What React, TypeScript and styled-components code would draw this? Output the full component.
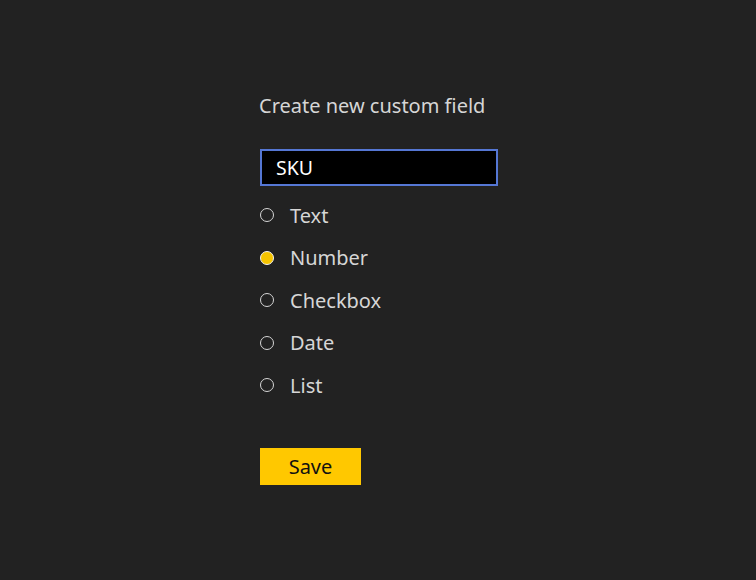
import { useState } from "react";
import styled, { createGlobalStyle } from "styled-components";

const GlobalStyle = createGlobalStyle`
  html, body {
    margin: 0;
    padding: 0;
    background: #222222;
  }
  body {
    font-family: "Noto Sans", "Open Sans", sans-serif;
  }
`;

const Page = styled.div`
  min-height: 580px;
  display: flex;
  justify-content: center;
  padding: 92px 0 0 2px;
  box-sizing: border-box;
`;

const Form = styled.form`
  width: 238px;
  display: flex;
  flex-direction: column;
`;

const Title = styled.h1`
  margin: 0 0 0 -1px;
  font-size: 20px;
  font-weight: 400;
  color: #d6d6d6;
  line-height: 27px;
  white-space: nowrap;
`;

const NameInput = styled.input`
  margin-top: 30px;
  height: 37px;
  box-sizing: border-box;
  width: 238px;
  background: #000000;
  border: 2px solid #5577d4;
  color: #ffffff;
  font-family: inherit;
  font-size: 19.5px;
  padding: 0 14px;
  outline: none;
`;

const Options = styled.div`
  margin-top: 8px;
  display: flex;
  flex-direction: column;
`;

const Option = styled.label`
  display: flex;
  align-items: center;
  height: 42.5px;
  gap: 16px;
  color: #d6d6d6;
  font-size: 20px;
  cursor: pointer;
`;

const Radio = styled.input.attrs({ type: "radio" })`
  appearance: none;
  margin: 0;
  width: 14px;
  height: 14px;
  border-radius: 50%;
  border: 1.5px solid #d6d6d6;
  box-sizing: border-box;
  background: transparent;

  &:checked {
    background: #f5c400;
    border-color: #f2f2f2;
  }
`;

const SaveButton = styled.button`
  margin-top: 41px;
  width: 101px;
  height: 37px;
  background: #ffc800;
  border: none;
  color: #111111;
  font-family: inherit;
  font-size: 20px;
  cursor: pointer;
`;

const types = ["Text", "Number", "Checkbox", "Date", "List"];

export default function App() {
  const [name, setName] = useState("SKU");
  const [type, setType] = useState("Number");

  return (
    <Page>
      <GlobalStyle />
      <Form onSubmit={(e) => e.preventDefault()}>
        <Title>Create new custom field</Title>
        <NameInput value={name} onChange={(e) => setName(e.target.value)} />
        <Options>
          {types.map((t) => (
            <Option key={t}>
              <Radio
                name="type"
                checked={type === t}
                onChange={() => setType(t)}
              />
              {t}
            </Option>
          ))}
        </Options>
        <SaveButton type="submit">Save</SaveButton>
      </Form>
    </Page>
  );
}
